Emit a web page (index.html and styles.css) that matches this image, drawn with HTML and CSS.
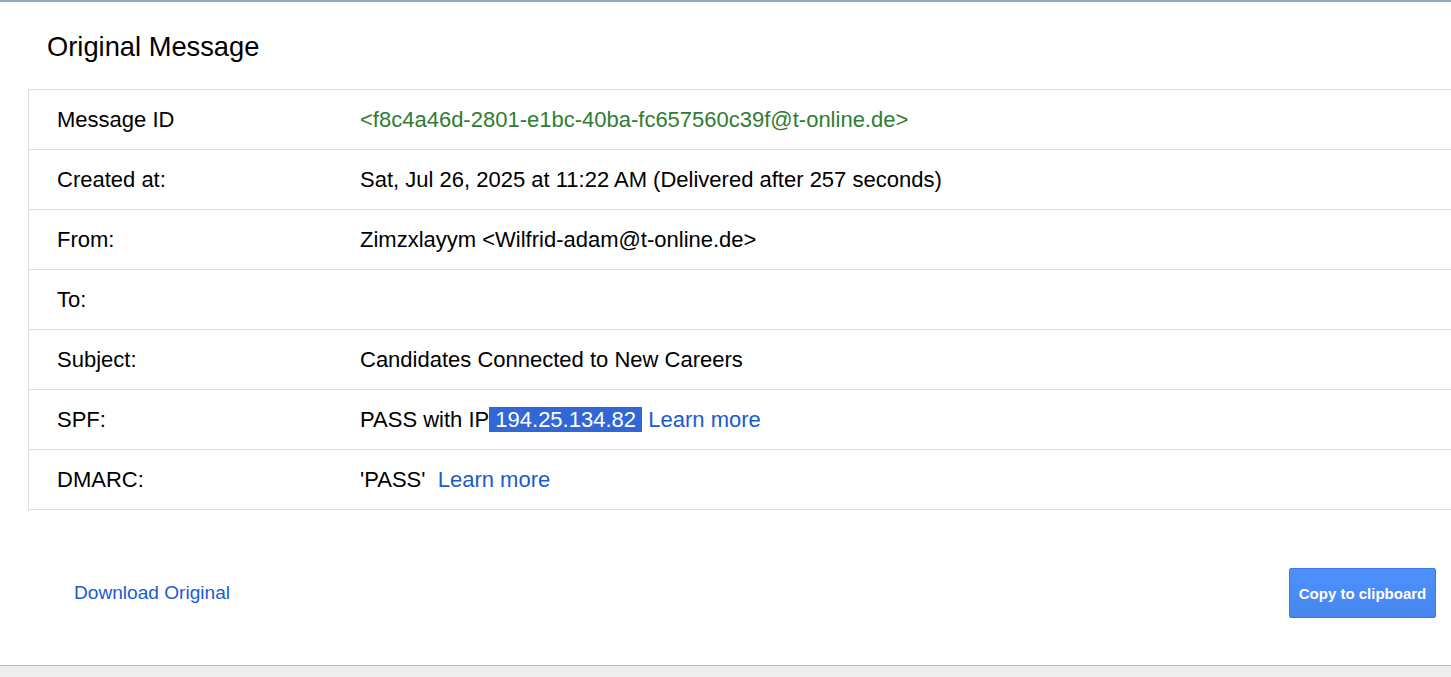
FILE: index.html
```html
<!DOCTYPE html>
<html>
<head>
<meta charset="utf-8">
<link rel="stylesheet" href="styles.css">
</head>
<body>
<div class="topbar"></div>
<main class="page">
  <h1 class="title">Original Message</h1>
  <div class="details">
    <div class="row"><div class="label">Message ID</div><div class="value msgid">&lt;f8c4a46d-2801-e1bc-40ba-fc657560c39f@t-online.de&gt;</div></div>
    <div class="row"><div class="label">Created at:</div><div class="value">Sat, Jul 26, 2025 at 11:22 AM (Delivered after 257 seconds)</div></div>
    <div class="row"><div class="label">From:</div><div class="value">Zimzxlayym &lt;Wilfrid-adam@t-online.de&gt;</div></div>
    <div class="row"><div class="label">To:</div><div class="value"></div></div>
    <div class="row"><div class="label">Subject:</div><div class="value">Candidates Connected to New Careers</div></div>
    <div class="row"><div class="label">SPF:</div><div class="value">PASS with IP<span class="hl">&nbsp;194.25.134.82&nbsp;</span> <a class="link" href="#">Learn more</a></div></div>
    <div class="row"><div class="label">DMARC:</div><div class="value">'PASS'&nbsp; <a class="link" href="#">Learn more</a></div></div>
  </div>
  <div class="footer">
    <a class="link download" href="#">Download Original</a>
    <button class="copy">Copy to clipboard</button>
  </div>
</main>
<div class="bottombar"></div>
</body>
</html>
```
FILE: styles.css
```css
html, body {
  margin: 0;
  padding: 0;
  background: #fff;
  overflow: hidden;
  height: 677px;
  font-family: "Liberation Sans", Arial, sans-serif;
  color: #000;
}
.topbar {
  height: 2px;
  background: #9aa8bd;
}
.page {
  height: 663px;
  display: flex;
  flex-direction: column;
}
.title {
  margin: 29px 0 27px 47px;
  font-size: 27.3px;
  line-height: 31px;
  font-weight: normal;
}
.details {
  margin-left: 28px;
  width: 1460px;
  border: 1px solid #dddddd;
  border-bottom: none;
}
.row {
  display: flex;
  align-items: center;
  height: 59px;
  border-bottom: 1px solid #dddddd;
  font-size: 22px;
}
.label {
  width: 303px;
  padding-left: 28px;
}
.value {
  flex: 1;
  white-space: nowrap;
}
.msgid {
  color: #2e7d32;
}
.hl {
  background: #3367d6;
  color: #fff;
}
.link {
  color: #1a5bd0;
  text-decoration: none;
}
.footer {
  flex: 1;
  display: flex;
  align-items: center;
  justify-content: space-between;
  padding: 11px 15px 0 74px;
}
.download {
  font-size: 19.1px;
}
.copy {
  width: 147px;
  height: 50px;
  border: 1px solid #3b7ae6;
  border-radius: 2px;
  background: linear-gradient(#4d90fe, #4787ed);
  color: #fff;
  font-family: "Liberation Sans", Arial, sans-serif;
  font-weight: bold;
  font-size: 15px;
  padding: 0;
}
.bottombar {
  height: 12px;
  border-top: 1px solid #bbbbbb;
  background: #eeeeee;
}
```
